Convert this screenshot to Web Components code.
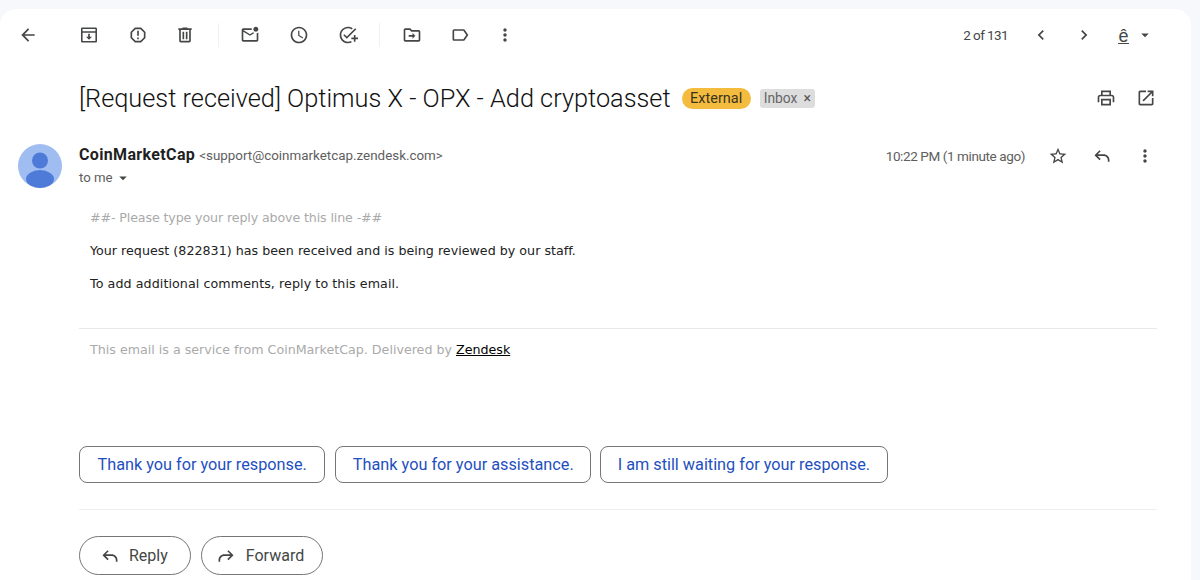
<!DOCTYPE html>
<html><head><meta charset="utf-8"><title>Mail</title>
<style>html,body{margin:0;height:580px;overflow:hidden;background:#f6f8fc}</style>
</head><body>
<mail-card>
  <mail-toolbar></mail-toolbar>
  <mail-subject></mail-subject>
  <mail-header></mail-header>
  <mail-body></mail-body>
  <mail-suggestions></mail-suggestions>
  <mail-actions></mail-actions>
</mail-card>
<script>
const P={
back:'<path d="M20 11H7.83l5.59-5.59L12 4l-8 8 8 8 1.41-1.41L7.83 13H20v-2z"/>',
archive:'<path d="M20 3H4c-1 0-1.6.7-1.6 1.6v14.8C2.4 20.3 3.1 21 4 21h16c.9 0 1.6-.7 1.6-1.6V4.600C21.600 3.700 21 3 20 3zM4.300 4.900h15.400V7.500H4.300V4.900zm0 14.200V9.400h15.400v9.700H4.300z"/><path d="M11 10.500h2V14h2.600L12 17.800 8.400 14H11z"/>',
report:'<path d="M15.730 3H8.270L3 8.270v7.460L8.270 21h7.460L21 15.730V8.270L15.730 3zM19 14.900L14.900 19H9.100L5 14.900V9.100L9.100 5h5.800L19 9.100v5.800z"/><path d="M11 7h2v6h-2zm0 8h2v2h-2z"/>',
del:'<path d="M15 4V3H9v1H4v2h1v13c0 1.100.9 2 2 2h10c1.100 0 2-.9 2-2V6h1V4h-5zm2 15H7V6h10v13zM9 8h2v9H9zm4 0h2v9h-2z"/>',
unread:'<path d="M22 8.980V18c0 1.100-.9 2-2 2H4c-1.100 0-2-.9-2-2V6c0-1.100.9-2 2-2h10.100c-.06.32-.1.66-.1 1s.04.68.1 1H4l8 5 3.670-2.290c.47.43 1.020.76 1.630.98L12 13 4 8v10h16V9.900c.74-.15 1.420-.48 2-.92zM16 5c0 1.660 1.340 3 3 3s3-1.340 3-3-1.340-3-3-3-3 1.340-3 3z"/>',
clock:'<path d="M11.990 2C6.470 2 2 6.480 2 12s4.470 10 9.990 10C17.520 22 22 17.520 22 12S17.520 2 11.990 2zM12 20c-4.420 0-8-3.580-8-8s3.580-8 8-8 8 3.580 8 8-3.580 8-8 8zm.5-13H11v6l5.250 3.150.75-1.230-4.500-2.670z"/>',
task:'<path d="M22 5.180L10.590 16.600l-4.240-4.240 1.410-1.410 2.830 2.830 10-10L22 5.180zM12 20c-4.410 0-8-3.590-8-8s3.590-8 8-8c1.570 0 3.040.46 4.280 1.250l1.450-1.450C16.100 2.670 14.130 2 12 2 6.480 2 2 6.480 2 12s4.480 10 10 10c1.730 0 3.360-.44 4.780-1.220l-1.500-1.500c-1 .46-2.110.72-3.280.72zm7-5h-3v2h3v3h2v-3h3v-2h-3v-3h-2v3z"/>',
move:'<path d="M20 6h-8l-2-2H4c-1.100 0-1.990.9-1.990 2L2 18c0 1.100.9 2 2 2h16c1.100 0 2-.9 2-2V8c0-1.100-.9-2-2-2zm0 12H4V6h5.170l2 2H20v10z"/><path d="M12.600 9.500L16 13l-3.400 3.500v-2.400H8v-2.200h4.600z"/>',
label:'<path d="M17.630 5.840C17.270 5.330 16.670 5 16 5L5 5.010C3.900 5.010 3 5.900 3 7v10c0 1.100.9 1.990 2 1.990L16 19c.67 0 1.270-.33 1.630-.84L22 12l-4.370-6.160zM16 17H5V7h11l3.550 5L16 17z"/>',
more:'<path d="M12 8c1.100 0 2-.9 2-2s-.9-2-2-2-2 .9-2 2 .9 2 2 2zm0 2c-1.100 0-2 .9-2 2s.9 2 2 2 2-.9 2-2-.9-2-2-2zm0 6c-1.100 0-2 .9-2 2s.9 2 2 2 2-.9 2-2-.9-2-2-2z"/>',
left:'<path d="M15.410 7.410L14 6l-6 6 6 6 1.410-1.410L10.830 12z"/>',
right:'<path d="M10 6L8.590 7.410 13.170 12l-4.580 4.590L10 18l6-6z"/>',
print:'<path d="M19 8h-1V3H6v5H5c-1.660 0-3 1.340-3 3v6h4v4h12v-4h4v-6c0-1.660-1.340-3-3-3zM8 5h8v3H8V5zm8 14H8v-4h8v4zm2-2v-4H6v4H4v-6c0-.55.45-1 1-1h14c.55 0 1 .45 1 1v6h-2z"/>',
open:'<path d="M19 19H5V5h7V3H5c-1.110 0-2 .9-2 2v14c0 1.100.89 2 2 2h14c1.100 0 2-.9 2-2v-7h-2v7zM14 3v2h3.590l-9.830 9.830 1.410 1.410L19 6.410V10h2V3h-7z"/>',
star:'<path d="M22 9.240l-7.190-.62L12 2 9.190 8.630 2 9.240l5.460 4.730L5.820 21 12 17.270 18.180 21l-1.630-7.030L22 9.240zM12 15.400l-3.760 2.270 1-4.280-3.320-2.880 4.380-.38L12 6.100l1.710 4.040 4.380.38-3.320 2.880 1 4.280L12 15.400z"/>',
reply:'<path d="M21 19v-2c0-3.870-3.130-7-7-7H6.830l3.580-3.590L9 5l-6 6 6 6 1.410-1.410L6.830 12H14c2.760 0 5 2.240 5 5v2h2z"/>',
forward:'<path d="M3 19v-2c0-3.870 3.130-7 7-7h7.170l-3.580-3.590L15 5l6 6-6 6-1.410-1.410L17.170 12H10c-2.760 0-5 2.240-5 5v2H3z"/>',
caret:'<path d="M7 10l5 5 5-5z"/>'
};
function comp(tag,css,html){
  customElements.define(tag,class extends HTMLElement{
    connectedCallback(){ if(this.shadowRoot) return;
      const r=this.attachShadow({mode:'open'});
      r.innerHTML='<style>'+css+'</style>'+(typeof html==='function'?html(this):html);
    }
  });
}
comp('gm-icon',':host{display:inline-flex;align-items:center;justify-content:center;flex:none;color:#444746}svg{display:block;fill:currentColor}',
  el=>{const s=el.getAttribute('size')||20;return `<svg width="${s}" height="${s}" viewBox="0 0 24 24">${P[el.getAttribute('name')]}</svg>`});
comp('mail-card',':host{display:flex;flex-direction:column;box-sizing:border-box;margin:9px 9px 0 0;height:571px;background:#fff;border-radius:16px 16px 0 0;overflow:hidden;font-family:Roboto,"Liberation Sans",sans-serif}','<slot></slot>');
comp('mail-toolbar',`:host{display:flex;align-items:center;height:52px;flex:none;padding-left:8px;box-sizing:border-box}
 gm-icon{width:40px;height:40px}
 .sep{width:1px;height:24px;background:#f1f1f1;flex:none}
 .spacer{flex:1}
 .count{font-size:13.500px;letter-spacing:-.6px;color:#444746;margin-right:13px}
 .ime{display:inline-flex;align-items:center;margin-left:14px;margin-right:37px;color:#444746}
 .e{font:18px/15px "Liberation Sans",sans-serif;border-bottom:1.500px solid #444746;width:11px;text-align:center;height:14px;margin-right:7px;margin-top:3px;overflow:visible}`,
 `<gm-icon name="back"></gm-icon>
  <gm-icon name="archive" style="margin-left:21px"></gm-icon>
  <gm-icon name="report" style="margin-left:9px"></gm-icon>
  <gm-icon name="del" style="margin-left:7px"></gm-icon>
  <span class="sep" style="margin-left:13px"></span>
  <gm-icon name="unread" style="margin-left:11px"></gm-icon>
  <gm-icon name="clock" style="margin-left:9px"></gm-icon>
  <gm-icon name="task" style="margin-left:9px"></gm-icon>
  <span class="sep" style="margin-left:11px"></span>
  <gm-icon name="move" style="margin-left:12px"></gm-icon>
  <gm-icon name="label" style="margin-left:8px"></gm-icon>
  <gm-icon name="more" style="margin-left:5px"></gm-icon>
  <span class="spacer"></span>
  <span class="count">2 of 131</span>
  <gm-icon name="left"></gm-icon>
  <gm-icon name="right" style="margin-left:3px"></gm-icon>
  <span class="ime"><span class="e">ê</span><gm-icon name="caret" size="18" style="width:18px;height:18px"></gm-icon></span>`);
comp('mail-subject',`:host{display:flex;align-items:center;height:74px;flex:none;padding-left:79px;box-sizing:border-box}
 h1{margin:0;padding-top:2px;font:300 25.320px/34px Roboto,sans-serif;color:#111;white-space:nowrap}
 .ext{margin-left:11px;background:#f4bc3f;color:#3b3320;font-size:14.500px;line-height:21px;height:21px;padding:0 8.500px;border-radius:11px}
 .inbox{margin-left:9px;background:#dddddd;color:#666;font-size:13.800px;line-height:19px;height:19px;padding:0 4px;border-radius:3px;display:inline-flex;align-items:center}
 .inbox b{font-weight:400;margin-left:6px;font-size:14px;color:#555}
 .spacer{flex:1}
 gm-icon{width:24px;height:24px}`,
 `<h1>[Request received] Optimus X - OPX - Add cryptoasset</h1><span class="ext">External</span><span class="inbox">Inbox<b>×</b></span><span class="spacer"></span>
 <gm-icon name="print" style="margin-right:16px"></gm-icon><gm-icon name="open" style="margin-right:33px"></gm-icon>`);
comp('mail-header',`:host{display:flex;flex:none;height:62px;padding:9px 0 0 18px;box-sizing:content-box;align-items:flex-start}
 .av{width:44px;height:44px;flex:none;margin-right:17px}
 .who{flex:1;display:flex;flex-direction:column;margin-top:-1px}
 .l1{font-size:13.400px;line-height:24px;color:#5e5e5e;white-space:nowrap}
 .l1 b{font-size:16px;letter-spacing:.35px;color:#1f1f1f;font-weight:700;margin-right:4px}
 .l2{font-size:13.200px;line-height:20px;color:#5e5e5e;display:flex;align-items:center}
 .time{font-size:13.500px;letter-spacing:-.4px;line-height:24px;color:#5e5e5e;margin-right:21px}
 .r{display:flex;align-items:center}
 gm-icon{height:24px;width:24px}`,
 `<svg class="av" viewBox="0 0 44 44"><circle cx="22" cy="22" r="22" fill="#a0bdf2"/><circle cx="22" cy="16.500" r="8" fill="#4f7bd8"/><ellipse cx="22" cy="35" rx="14" ry="9" fill="#4f7bd8"/></svg>
 <div class="who"><div class="l1"><b>CoinMarketCap</b>&lt;support@coinmarketcap.zendesk.com&gt;</div>
 <div class="l2">to me<gm-icon name="caret" size="18" style="width:18px;height:18px;margin-left:1px"></gm-icon></div></div>
 <div class="r"><span class="time">10:22 PM (1 minute ago)</span><gm-icon name="star"></gm-icon><gm-icon name="reply" style="margin-left:20px"></gm-icon><gm-icon name="more" style="margin-left:19px;margin-right:34px"></gm-icon></div>`);
comp('mail-body',`:host{display:block;flex:none;margin:0 34px 0 79px;font:12.660px/20px "DejaVu Sans",Verdana,sans-serif;color:#222;height:238px;padding-top:2px}
 p{margin:0;padding-left:11px}
 .g{color:#aaa}
 .first{letter-spacing:-.13px}
 .a{margin-top:13px;letter-spacing:.015px}
 .b{margin-top:13px;letter-spacing:.08px}
 hr{border:0;border-top:1px solid #e8e8e8;margin:34px 0 11px}
 a{color:#000;text-decoration:underline}`,
 `<p class="g first">##- Please type your reply above this line -##</p>
 <p class="a">Your request (822831) has been received and is being reviewed by our staff.</p>
 <p class="b">To add additional comments, reply to this email.</p>
 <hr><p class="g">This email is a service from CoinMarketCap. Delivered by <a href="#">Zendesk</a></p>`);
comp('mail-suggestions',`:host{display:flex;flex:none;margin:0 34px 0 79px;gap:9px;height:63px;border-bottom:1px solid #eeeeee;box-sizing:content-box}
 button{height:37px;box-sizing:border-box;background:#fff;border:1px solid #747775;border-radius:8px;font:400 16.250px Roboto,sans-serif;color:#1f4fbf;padding:0 17.500px;white-space:nowrap}
 .second{margin-left:1px;padding:0 16.500px}
 .third{padding:0 16.500px}`,
 `<button>Thank you for your response.</button><button class="second">Thank you for your assistance.</button><button class="third">I am still waiting for your response.</button>`);
comp('mail-actions',`:host{display:flex;flex:none;margin:26px 0 0 79px;gap:10px}
 button{height:39px;box-sizing:border-box;background:#fff;border:1px solid #747775;border-radius:20px;font:400 16px Roboto,sans-serif;color:#444746;display:inline-flex;align-items:center;white-space:nowrap}
 gm-icon{width:20px;height:20px;margin-right:9px}`,
 `<button style="padding:0 22px 0 20px"><gm-icon name="reply"></gm-icon>Reply</button><button style="padding:0 18px 0 14px"><gm-icon name="forward" style="margin-right:10px"></gm-icon>Forward</button>`);
</script>
</body></html>
